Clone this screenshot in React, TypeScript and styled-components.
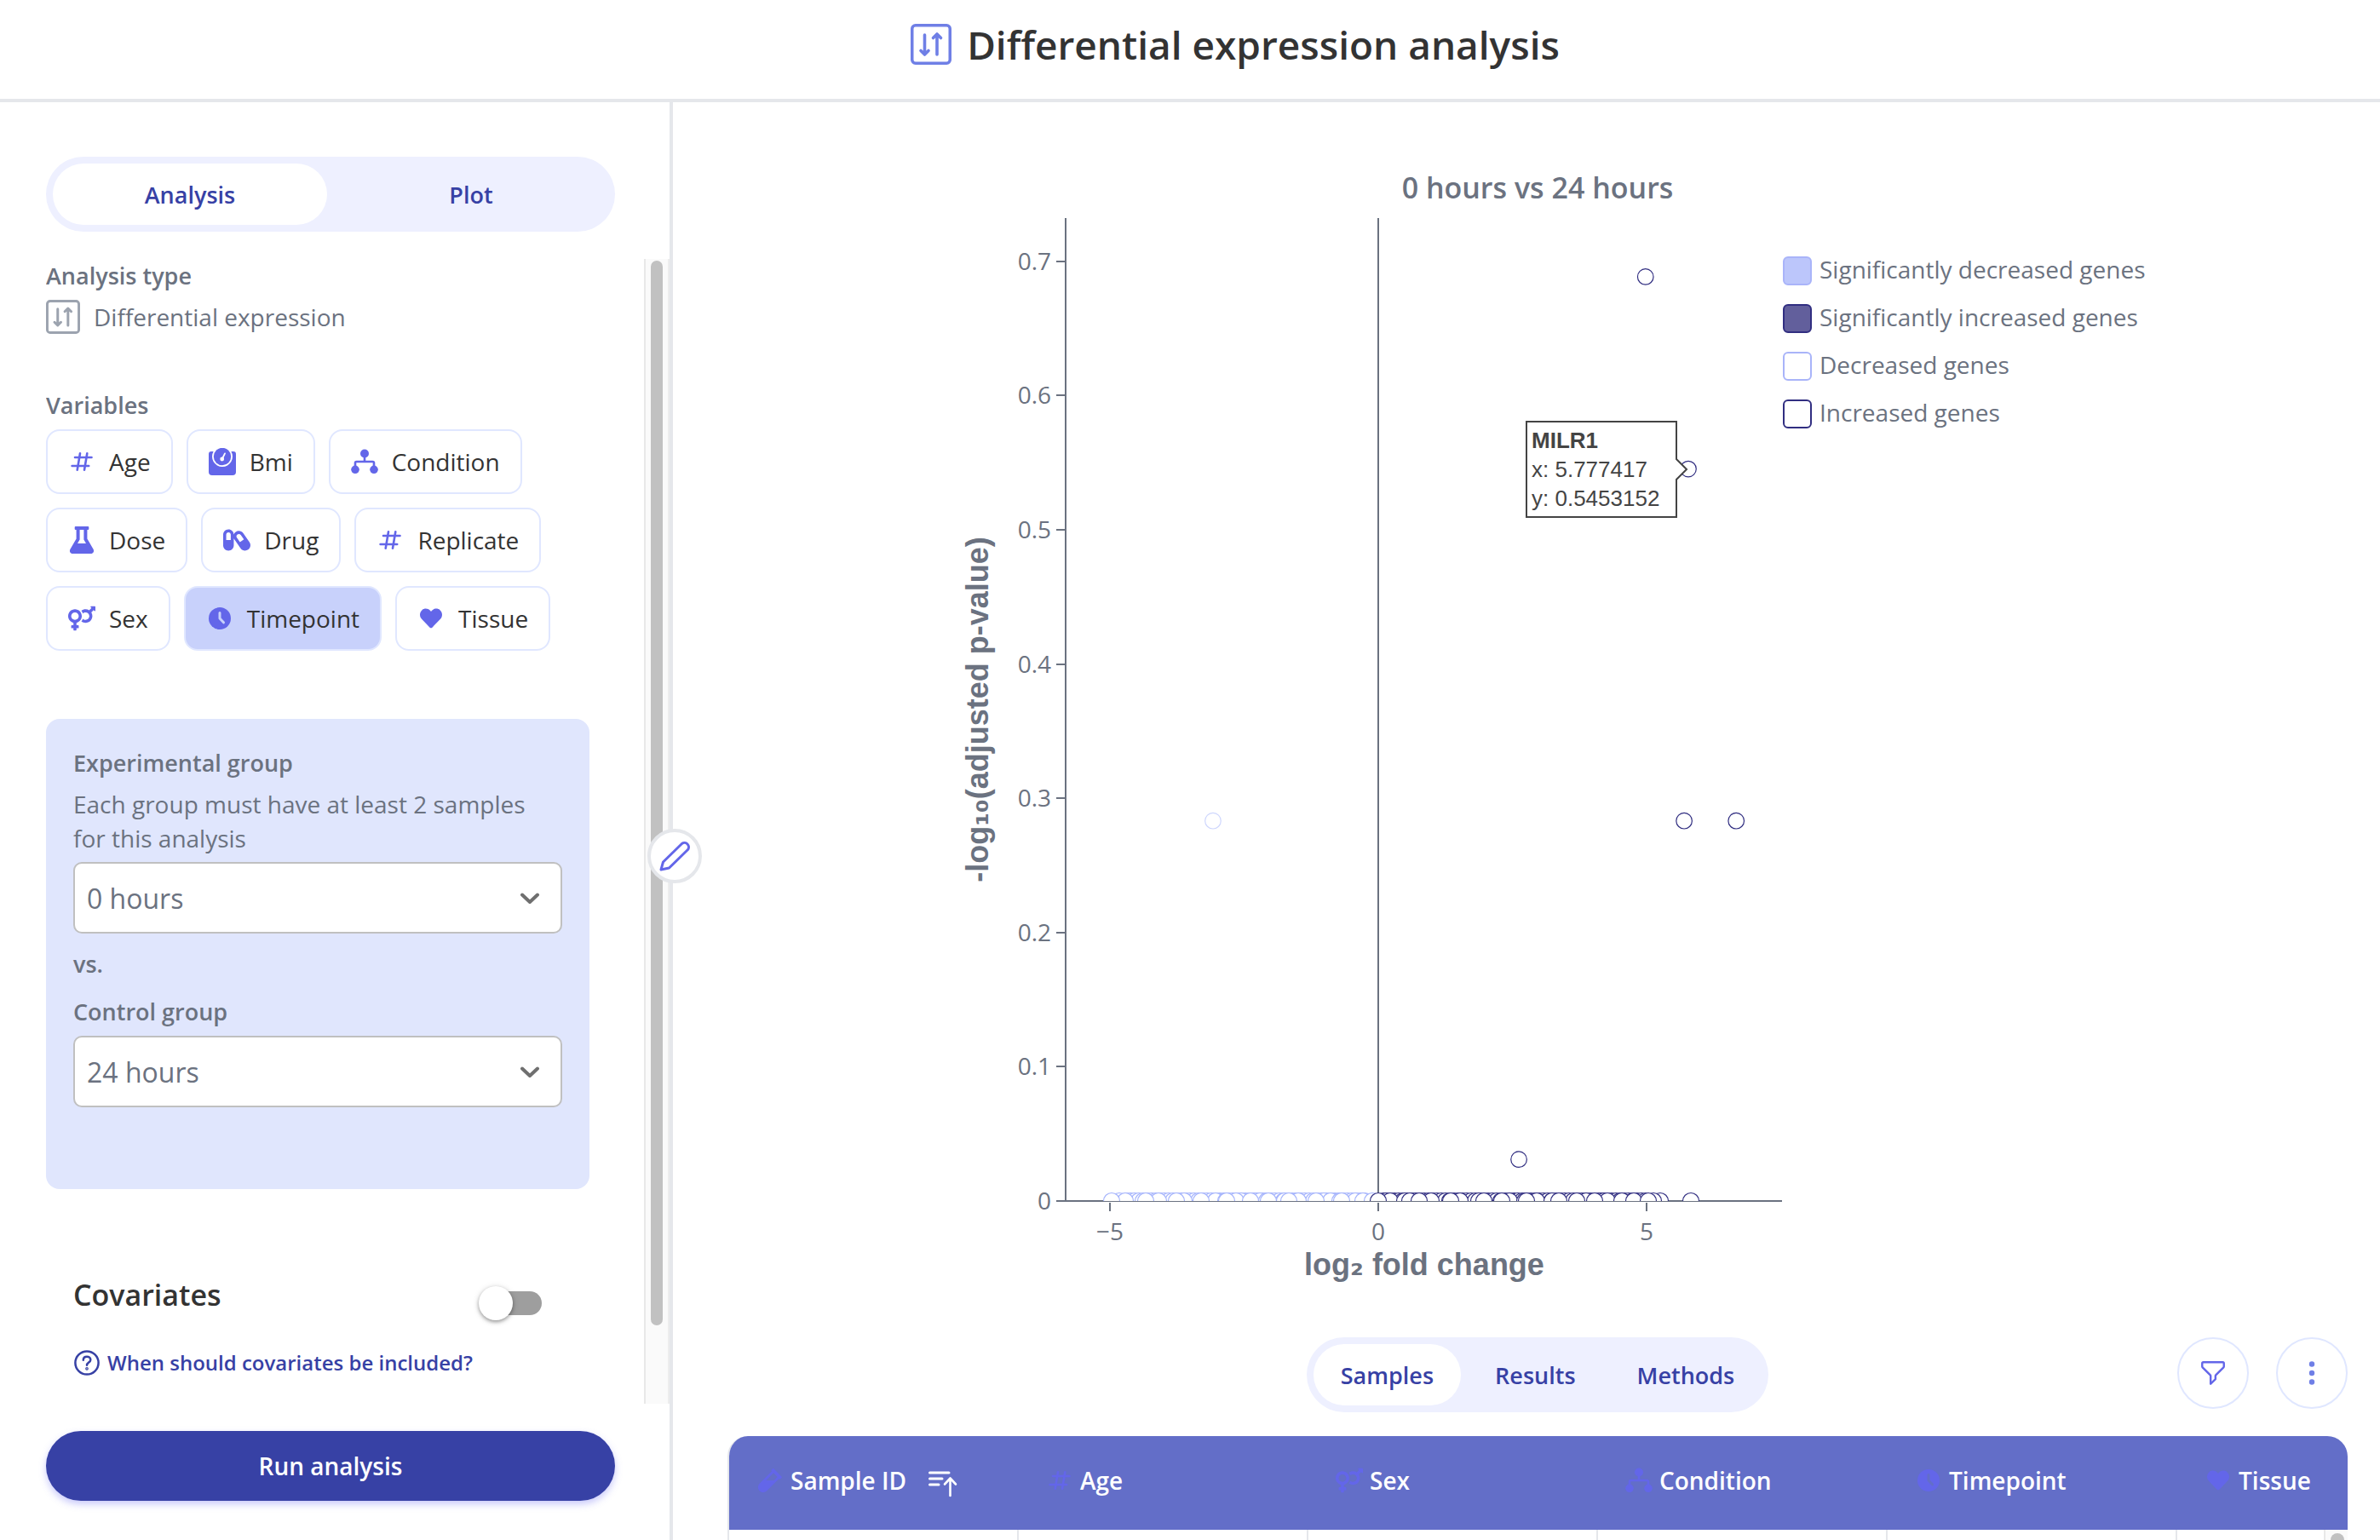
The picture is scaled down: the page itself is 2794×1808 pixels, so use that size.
import React, { useState } from "react";
import styled, { createGlobalStyle } from "styled-components";
import { FaCapsules, FaHeart, FaVenusMars, FaVial } from "react-icons/fa";

const c = {
  ink: "#333333",
  muted: "#6b7280",
  soft: "#9ca3af",
  line: "#e5e7eb",
  indigo: "#3741a5",
  icon: "#6366e9",
  pale: "#eef0ff",
  chip: "#e0e7ff",
  chipOn: "#c8d1fb",
  panel: "#e0e6fd",
  head: "#636ec8",
  light: "#a5b4fc",
  dark: "#312e81",
};

const Global = createGlobalStyle`
  *, *::before, *::after { box-sizing: border-box; }
  body {
    margin: 0;
    background: #ffffff;
    color: ${c.ink};
    font-family: "Open Sans", sans-serif;
    font-size: 28px;
    line-height: 40px;
  }
  button, select, input { font-family: inherit; margin: 0; }
`;

/* ---------- layout ---------- */

const Page = styled.div`
  display: flex;
  flex-direction: column;
  height: 100vh;
  overflow: hidden;
`;

const Header = styled.header`
  display: flex;
  flex: none;
  align-items: center;
  justify-content: center;
  gap: 18px;
  height: 120px;
  padding: 0 0 12px 106px;
  border-bottom: 4px solid ${c.line};
  color: #6f7fe6;
`;

const Title = styled.h1`
  margin: 0;
  font-size: 46px;
  font-weight: 600;
  line-height: 64px;
  color: ${c.ink};
`;

const Body = styled.div`
  display: flex;
  flex: 1;
  min-height: 0;
`;

const Sidebar = styled.aside`
  position: relative;
  display: flex;
  flex: 0 0 790px;
  flex-direction: column;
  border-right: 4px solid ${c.line};
  padding: 64px 0 0 54px;
`;

const SidebarTabs = styled.div`
  padding-right: 64px;
  margin-bottom: 32px;
`;

const ScrollRow = styled.div`
  display: flex;
  flex: 1;
  min-height: 0;
  justify-content: space-between;
`;

const ScrollContent = styled.div`
  width: 638px;
  overflow: hidden;
`;

const ScrollTrack = styled.div`
  display: flex;
  width: 30px;
  padding: 2px 6px;
  border-left: 2px solid #e8e8e8;
  border-right: 2px solid #ededed;
  background: #fafafa;
`;

const ScrollThumb = styled.div`
  flex: 1;
  height: calc(100% - 90px);
  border-radius: 8px;
  background: #c1c1c1;
`;

const SidebarFooter = styled.div`
  padding: 32px 64px 46px 0;
`;

const Main = styled.main`
  display: flex;
  flex: 1;
  min-width: 0;
  flex-direction: column;
  padding: 0 38px 0 64px;
`;

/* ---------- shared controls ---------- */

const TabBar = styled.div<{ $fill?: boolean }>`
  display: ${(p) => (p.$fill ? "flex" : "inline-flex")};
  gap: 8px;
  padding: 8px;
  border-radius: 44px;
  background: ${c.pale};
`;

const Tab = styled.button<{ $active: boolean; $fill?: boolean }>`
  flex: ${(p) => (p.$fill ? "1" : "none")};
  height: 72px;
  padding: 0 32px;
  border: 0;
  border-radius: 36px;
  background: ${(p) => (p.$active ? "#ffffff" : "transparent")};
  color: ${c.indigo};
  font-size: 27px;
  font-weight: 600;
  cursor: pointer;
`;

function Tabs({ items, label, fill }: { items: string[]; label: string; fill?: boolean }) {
  const [active, setActive] = useState(items[0]);
  return (
    <TabBar role="tablist" aria-label={label} $fill={fill}>
      {items.map((t) => (
        <Tab
          key={t}
          type="button"
          role="tab"
          aria-selected={t === active}
          $active={t === active}
          $fill={fill}
          onClick={() => setActive(t)}
        >
          {t}
        </Tab>
      ))}
    </TabBar>
  );
}

const Section = styled.section<{ $gap: number }>`
  display: flex;
  flex-direction: column;
  gap: 8px;
  margin-bottom: ${(p) => p.$gap}px;
`;

const Label = styled.h2`
  margin: 0;
  font-size: 27px;
  font-weight: 600;
  line-height: 40px;
  color: ${c.muted};
`;

const TypeRow = styled.div`
  display: flex;
  align-items: center;
  gap: 16px;
  color: ${c.soft};
  span {
    color: ${c.muted};
  }
`;

const Chips = styled.div`
  display: flex;
  flex-wrap: wrap;
  gap: 16px;
`;

const Chip = styled.button<{ $on: boolean }>`
  display: inline-flex;
  align-items: center;
  gap: 16px;
  height: 76px;
  padding: 0 24px;
  border: 2px solid ${c.chip};
  border-radius: 16px;
  background: ${(p) => (p.$on ? c.chipOn : "#ffffff")};
  color: ${c.ink};
  font-size: 28px;
  cursor: pointer;
`;

const IconBox = styled.span`
  display: inline-flex;
  flex: none;
  align-items: center;
  justify-content: center;
  width: 32px;
  height: 32px;
  color: ${c.icon};
`;

const Panel = styled.section`
  display: flex;
  flex-direction: column;
  gap: 16px;
  margin-bottom: 96px;
  padding: 32px 32px 96px;
  border-radius: 16px;
  background: ${c.panel};
  color: ${c.muted};
`;

const Field = styled.div`
  display: flex;
  flex-direction: column;
  gap: 8px;
`;

const FieldLabel = styled.label`
  font-size: 27px;
  font-weight: 600;
`;

const Hint = styled.p`
  margin: 0;
`;

const Versus = styled.span`
  font-size: 27px;
  font-weight: 600;
`;

const SelectBox = styled.div`
  position: relative;
  svg {
    position: absolute;
    top: 36px;
    right: 26px;
    pointer-events: none;
  }
`;

const Select = styled.select`
  display: block;
  width: 100%;
  height: 84px;
  padding: 0 64px 0 14px;
  border: 2px solid #c0c0c0;
  border-radius: 10px;
  appearance: none;
  background: #ffffff;
  color: ${c.muted};
  font-size: 32px;
`;

const Covariates = styled.section`
  display: flex;
  flex-direction: column;
  align-items: flex-start;
  gap: 16px;
  padding: 0 24px 0 32px;
`;

const CovariatesRow = styled.div`
  display: flex;
  width: 100%;
  height: 76px;
  align-items: center;
  justify-content: space-between;
  padding-right: 32px;
`;

const CovariatesLabel = styled.label`
  align-self: flex-start;
  padding-top: 4px;
  font-size: 34px;
  font-weight: 600;
  line-height: 48px;
`;

const Switch = styled.input`
  display: flex;
  align-items: center;
  width: 68px;
  height: 28px;
  border-radius: 14px;
  appearance: none;
  background: #9e9e9e;
  cursor: pointer;
  &::before {
    content: "";
    flex: none;
    width: 40px;
    height: 40px;
    margin-left: -6px;
    border-radius: 50%;
    background: #ffffff;
    box-shadow: 0 2px 4px rgba(0, 0, 0, 0.35), 0 1px 8px rgba(0, 0, 0, 0.12);
  }
  &:checked::before {
    margin-left: 34px;
  }
`;

const HelpLink = styled.a`
  display: inline-flex;
  align-items: center;
  gap: 8px;
  color: ${c.indigo};
  font-size: 24px;
  font-weight: 600;
  line-height: 32px;
  text-decoration: none;
`;

const RunButton = styled.button`
  width: 100%;
  height: 82px;
  border: 0;
  border-radius: 41px;
  background: ${c.indigo};
  box-shadow: 0 4px 8px rgba(99, 102, 241, 0.35);
  color: #ffffff;
  font-size: 28px;
  font-weight: 600;
  cursor: pointer;
`;

const EditHandle = styled.button`
  position: absolute;
  top: 853px;
  right: -38px;
  display: flex;
  align-items: center;
  justify-content: center;
  width: 64px;
  height: 64px;
  padding: 0;
  border: 4px solid ${c.line};
  border-radius: 50%;
  background: #ffffff;
  color: ${c.icon};
  cursor: pointer;
`;

const Toolbar = styled.div`
  display: grid;
  grid-template-columns: 1fr auto 1fr;
  flex: none;
  align-items: start;
  margin-bottom: 28px;
`;

const Actions = styled.div`
  display: flex;
  grid-column: 3;
  justify-content: flex-end;
  gap: 32px;
`;

const TabsSlot = styled.div`
  display: flex;
  grid-column: 2;
`;

const RoundButton = styled.button`
  display: flex;
  align-items: center;
  justify-content: center;
  width: 84px;
  height: 84px;
  padding: 0;
  border: 2px solid ${c.chip};
  border-radius: 50%;
  background: #ffffff;
  color: ${c.icon};
  cursor: pointer;
`;

const TableFrame = styled.div`
  flex: 1 0 auto;
  border-left: 2px solid ${c.line};
  border-radius: 24px 24px 0 0;
  overflow: hidden;
`;

const Table = styled.table`
  width: 100%;
  border-collapse: separate;
  border-spacing: 0;
  table-layout: fixed;
`;

const HeadCell = styled.th`
  height: 110px;
  padding: 0 0 6px 34px;
  background: ${c.head};
  color: #ffffff;
  font-weight: 600;
  text-align: left;
  &:first-child {
    padding-left: 32px;
  }
`;

const HeadInner = styled.div`
  display: flex;
  align-items: center;
  gap: 8px;
`;

const SortButton = styled.button`
  display: flex;
  margin-left: 16px;
  padding: 8px 0 0;
  border: 0;
  background: transparent;
  color: #ffffff;
`;

const Cell = styled.td`
  height: 80px;
  padding: 0;
  border-left: 2px solid ${c.line};
  &:first-child {
    border-left: 0;
  }
`;

const GutterCell = styled.td`
  padding: 4px 4px 0 6px;
  border-left: 2px solid #e8e8e8;
  background: #fafafa;
  vertical-align: top;
`;

const GutterThumb = styled.div`
  height: 72px;
  border-radius: 8px;
  background: #c1c1c1;
`;

const Col = styled.col<{ $w?: number }>`
  width: ${(p) => (p.$w ? p.$w + "px" : "auto")};
`;

/* ---------- icons ---------- */

const DiffIcon = ({ size }: { size: number }) => (
  <svg width={size} height={size} viewBox="0 0 48 48" fill="none" stroke="currentColor" strokeLinecap="round" strokeLinejoin="round">
    <rect x="1.75" y="1.75" width="44.5" height="44.5" rx="4" strokeWidth="3.5" />
    <path d="M16.5 13V35M12 31.5L16.5 36L21 31.5" strokeWidth="3.6" />
    <path d="M31 36V13M26.5 16.5L31 12L35.500 16.500" strokeWidth="3.600" />
  </svg>
);

const HashIcon = () => (
  <svg width="32" height="32" viewBox="0 0 32 32" fill="none" stroke="currentColor" strokeWidth="2.600" strokeLinecap="round">
    <path d="M8 11H27.500M4.600 21H24.200M14 6.300L10.700 25.700M22.300 6.300L19 25.700" />
  </svg>
);

const ScaleIcon = () => (
  <svg width="32" height="32" viewBox="0 0 32 32" fill="currentColor">
    <path d="M3 4H5.600A12 12 0 1 0 26.400 4H29A3 3 0 0 1 32 7V28A4 4 0 0 1 28 32H4A4 4 0 0 1 0 28V7A3 3 0 0 1 3 4Z" />
    <circle cx="16" cy="10" r="10.200" />
    <circle cx="15.700" cy="13" r="2.400" fill="#fff" />
    <path d="M16.200 12L19 6.400" stroke="#fff" strokeWidth="1.800" strokeLinecap="round" />
  </svg>
);

const TreeIcon = () => (
  <svg width="32" height="32" viewBox="0 0 32 32" fill="currentColor">
    <circle cx="16" cy="6.500" r="5" />
    <circle cx="5" cy="25.300" r="4.800" />
    <circle cx="27" cy="25.300" r="4.800" />
    <path d="M16 8V16M5 23V17.500Q5 16 6.500 16H25.500Q27 16 27 17.500V23" fill="none" stroke="currentColor" strokeWidth="2.600" />
  </svg>
);

const FlaskIcon = () => (
  <svg width="32" height="32" viewBox="0 0 32 32" fill="currentColor" fillRule="evenodd">
    <path d="M8.700 0H23.300A1 1 0 0 1 24.300 1V3A1 1 0 0 1 23.300 4H22.400V14.600L29.400 26.400C31 29.200 29.600 32 26.500 32H5.500C2.400 32 1 29.200 2.600 26.400L9.600 14.600V4H8.700A1 1 0 0 1 7.700 3V1A1 1 0 0 1 8.700 0ZM13.600 4V15.500L11 20H21L18.400 15.500V4Z" />
  </svg>
);

const ClockIcon = ({ cut = c.chipOn }: { cut?: string }) => (
  <svg width="32" height="32" viewBox="0 0 32 32">
    <circle cx="16" cy="16" r="13" fill="currentColor" />
    <path d="M16 9.500V16L20.500 20.800" fill="none" stroke={cut} strokeWidth="3" strokeLinecap="round" strokeLinejoin="round" />
  </svg>
);

const Chevron = () => (
  <svg width="24" height="14" viewBox="0 0 24 14" fill="none" stroke="#6f6f6f" strokeWidth="4" strokeLinecap="round" strokeLinejoin="round">
    <path d="M3 2.500L12 11L21 2.500" />
  </svg>
);

const HelpIcon = () => (
  <svg width="32" height="32" viewBox="0 0 32 32" fill="none" stroke="currentColor" strokeWidth="2.500" strokeLinecap="round">
    <circle cx="16" cy="16" r="13.600" />
    <path d="M11.800 12.800C11.800 10.300 13.600 8.800 16 8.800S20.300 10.300 20.300 12.500C20.300 15.600 16 15.600 16 18.800" />
    <circle cx="16" cy="22.800" r="0.600" />
  </svg>
);

const PencilIcon = () => (
  <svg width="40" height="40" viewBox="-2 -2 40 40" fill="none" stroke="currentColor" strokeWidth="3" strokeLinejoin="round">
    <path d="M2 34L4.500 25L26.500 3.500A5 5 0 0 1 33.500 10.500L11.500 32Z" />
  </svg>
);

const FunnelIcon = () => (
  <svg width="34" height="34" viewBox="0 0 24 24" fill="none" stroke="currentColor" strokeWidth="1.700" strokeLinejoin="round">
    <path d="M3 4a1 1 0 011-1h16a1 1 0 011 1v2.586a1 1 0 01-.293.707l-6.414 6.414a1 1 0 00-.293.707V17l-4 4v-6.586a1 1 0 00-.293-.707L3.293 7.293A1 1 0 013 6.586V4z" />
  </svg>
);

const DotsIcon = () => (
  <svg width="32" height="32" viewBox="0 0 32 32" fill="#6f7fe6">
    <circle cx="16" cy="5.500" r="3.200" />
    <circle cx="16" cy="16" r="3.200" />
    <circle cx="16" cy="26.500" r="3.200" />
  </svg>
);

const SortIcon = () => (
  <svg width="36" height="32" viewBox="0 0 36 32" fill="none" stroke="currentColor" strokeWidth="3" strokeLinecap="round" strokeLinejoin="round">
    <path d="M3.500 3H26M3.500 10H18M3.500 17H14" />
    <path d="M27.500 30V10M21 16.500L27.500 9.500L34 16.500" strokeWidth="2.600" />
  </svg>
);

const icons: Record<string, React.ReactNode> = {
  Age: <HashIcon />,
  Bmi: <ScaleIcon />,
  Condition: <TreeIcon />,
  Dose: <FlaskIcon />,
  Drug: <FaCapsules size={32} />,
  Replicate: <HashIcon />,
  Sex: <FaVenusMars size={32} />,
  Timepoint: <ClockIcon />,
  Tissue: <FaHeart size={26} />,
};

/* ---------- volcano plot ---------- */

const Plot = styled.svg`
  display: block;
  flex: none;
  width: 100%;
  height: auto;
`;

const TickText = styled.text`
  font-family: "Open Sans", sans-serif;
  font-size: 28px;
  fill: ${c.muted};
`;

const PlotTitle = styled.text`
  font-family: "Open Sans", sans-serif;
  font-size: 34px;
  font-weight: 600;
  fill: ${c.muted};
`;

const AxisTitle = styled.text`
  font-family: "Liberation Sans", Arial, sans-serif;
  font-size: 36px;
  font-weight: 700;
  fill: ${c.muted};
`;

const Sub = styled.tspan`
  font-family: "DejaVu Sans", sans-serif;
`;

const HoverText = styled.text<{ $bold?: boolean }>`
  font-family: "Liberation Sans", Arial, sans-serif;
  font-size: 26px;
  font-weight: ${(p) => (p.$bold ? 700 : 400)};
  fill: #444444;
`;

const px = (v: number) => 764 + v * 63;
const py = (v: number) => 1290 - v * 1576;

const sparse = [
  { x: 4.98, y: 0.6885, color: c.dark },
  { x: 5.777417, y: 0.5453152, color: c.dark },
  { x: 5.7, y: 0.2832, color: c.dark },
  { x: 6.67, y: 0.2832, color: c.dark },
  { x: 2.62, y: 0.031, color: c.dark },
  { x: -3.08, y: 0.2832, color: "#cfd7fd" },
];

const range = (from: number, to: number, step: number) => {
  const out: number[] = [];
  for (let v = from; v <= to; v += step) out.push(v);
  return out;
};

/* Genes at y = 0, in paint order: dense background first, then the later points. */
const lowLight = [
  ...range(468, 752, 5),
  460, 467, 506, 536, 573, 585, 603, 618, 621, 625, 633, 654, 669, 700, 708, 719, 737, 746, 757,
  451, 491, 527, 556, 597, 635, 670, 721, 586, 614, 659, 691,
];
const lowDark = [
  ...range(773, 1080, 5),
  770, 773, 778, 795, 808, 826, 860, 882, 918, 936, 950, 968, 1008, 1025, 1029, 1033, 1050,
  1095, 1087, 764, 801, 849, 812, 888, 909, 938, 976, 997, 1018, 1064, 1081, 1131,
];

const legend = [
  { text: "Significantly decreased genes", fill: "#bcc6fb", stroke: "#a9b4f9" },
  { text: "Significantly increased genes", fill: "#625f9c", stroke: c.dark },
  { text: "Decreased genes", fill: "#ffffff", stroke: "#a9b4f9" },
  { text: "Increased genes", fill: "#ffffff", stroke: c.dark },
];

function VolcanoPlot() {
  return (
    <Plot viewBox="0 0 1902 1450" role="img" aria-label="0 hours vs 24 hours volcano plot">
      <defs>
        <clipPath id="plot-area">
          <rect x="397" y="136" width="841" height="1154" />
        </clipPath>
      </defs>
      <PlotTitle x={951} y={113} textAnchor="middle">0 hours vs 24 hours</PlotTitle>

      <g stroke={c.muted} strokeWidth="2">
        <path d="M397 136V1291M764 136V1290M386 1290H1238" />
        {[1, 2, 3, 4, 5, 6, 7].map((i) => (
          <path key={i} d={`M386 ${Math.round(py(i / 10))}H397`} />
        ))}
        {[-5, 0, 5].map((v) => (
          <path key={v} d={`M${px(v)} 1292V1302`} />
        ))}
      </g>
      {[0, 1, 2, 3, 4, 5, 6, 7].map((i) => (
        <TickText key={i} x={380} y={py(i / 10) + 10} textAnchor="end">
          {i === 0 ? "0" : `0.${i}`}
        </TickText>
      ))}
      {["−5", "0", "5"].map((t, i) => (
        <TickText key={t} x={px((i - 1) * 5)} y={1336} textAnchor="middle">{t}</TickText>
      ))}

      <g clipPath="url(#plot-area)" fill="#ffffff" strokeWidth="1.200">
        {lowLight.map((x, i) => (
          <circle key={i} cx={x} cy="1290" r="9.500" stroke={c.light} />
        ))}
        {lowDark.map((x, i) => (
          <circle key={i} cx={x} cy="1290" r="9.500" stroke={c.dark} />
        ))}
        {sparse.map((p, i) => (
          <circle key={i} cx={px(p.x)} cy={py(p.y)} r="9.300" stroke={p.color} />
        ))}
      </g>

      <AxisTitle x={818} y={1377} textAnchor="middle">log<Sub>₂</Sub> fold change</AxisTitle>
      <AxisTitle transform="translate(306 713) rotate(-90)" textAnchor="middle">-log<Sub>₁₀</Sub>(adjusted p-value)</AxisTitle>

      {legend.map((l, i) => (
        <g key={l.text}>
          <rect x="1240" y={182 + i * 56} width="32" height="32" rx="5" fill={l.fill} stroke={l.stroke} strokeWidth="2" />
          <TickText x={1282} y={207 + i * 56}>{l.text}</TickText>
        </g>
      ))}

      <path d="M938 375H1114V419L1126 431L1114 443V487H938Z" fill="#ffffff" stroke="#444444" strokeWidth="2" />
      <HoverText $bold x={944} y={406}>MILR1</HoverText>
      <HoverText x={944} y={440}>x: 5.777417</HoverText>
      <HoverText x={944} y={474}>y: 0.5453152</HoverText>
    </Plot>
  );
}

/* ---------- page ---------- */

const variables = ["Age", "Bmi", "Condition", "Dose", "Drug", "Replicate", "Sex", "Timepoint", "Tissue"];
const groups = ["0 hours", "24 hours"];

function GroupSelect({ id, value }: { id: string; value: string }) {
  return (
    <SelectBox>
      <Select id={id} defaultValue={value}>
        {groups.map((g) => (
          <option key={g}>{g}</option>
        ))}
      </Select>
      <Chevron />
    </SelectBox>
  );
}

export default function App() {
  const [picked, setPicked] = useState("Timepoint");
  return (
    <Page>
      <Global />
      <Header>
        <DiffIcon size={48} />
        <Title>Differential expression analysis</Title>
      </Header>
      <Body>
        <Sidebar>
          <SidebarTabs>
            <Tabs items={["Analysis", "Plot"]} label="Settings" fill />
          </SidebarTabs>
          <ScrollRow>
            <ScrollContent>
              <Section $gap={64}>
                <Label>Analysis type</Label>
                <TypeRow>
                  <DiffIcon size={40} />
                  <span>Differential expression</span>
                </TypeRow>
              </Section>
              <Section $gap={80}>
                <Label>Variables</Label>
                <Chips>
                  {variables.map((v) => (
                    <Chip key={v} type="button" aria-pressed={v === picked} $on={v === picked} onClick={() => setPicked(v)}>
                      <IconBox>{icons[v]}</IconBox>
                      {v}
                    </Chip>
                  ))}
                </Chips>
              </Section>
              <Panel>
                <Field>
                  <FieldLabel htmlFor="experimental">Experimental group</FieldLabel>
                  <Hint>Each group must have at least 2 samples for this analysis</Hint>
                  <GroupSelect id="experimental" value="0 hours" />
                </Field>
                <Versus>vs.</Versus>
                <Field>
                  <FieldLabel htmlFor="control">Control group</FieldLabel>
                  <GroupSelect id="control" value="24 hours" />
                </Field>
              </Panel>
              <Covariates>
                <CovariatesRow>
                  <CovariatesLabel htmlFor="covariates">Covariates</CovariatesLabel>
                  <Switch id="covariates" type="checkbox" role="switch" />
                </CovariatesRow>
                <HelpLink href="#covariates">
                  <HelpIcon />
                  When should covariates be included?
                </HelpLink>
              </Covariates>
            </ScrollContent>
            <ScrollTrack>
              <ScrollThumb />
            </ScrollTrack>
          </ScrollRow>
          <SidebarFooter>
            <RunButton type="button">Run analysis</RunButton>
          </SidebarFooter>
          <EditHandle type="button" aria-label="Edit">
            <PencilIcon />
          </EditHandle>
        </Sidebar>
        <Main>
          <VolcanoPlot />
          <Toolbar>
            <TabsSlot>
              <Tabs items={["Samples", "Results", "Methods"]} label="Tables" />
            </TabsSlot>
            <Actions>
              <RoundButton type="button" aria-label="Filter">
                <FunnelIcon />
              </RoundButton>
              <RoundButton type="button" aria-label="More options">
                <DotsIcon />
              </RoundButton>
            </Actions>
          </Toolbar>
          <TableFrame>
            <Table>
              <colgroup>
                <Col $w={338} />
                <Col $w={340} />
                <Col $w={340} />
                <Col $w={340} />
                <Col $w={340} />
                <Col />
                <Col $w={28} />
              </colgroup>
              <thead>
                <tr>
                  <HeadCell>
                    <HeadInner>
                      <IconBox><FaVial size={30} /></IconBox>
                      Sample ID
                      <SortButton type="button" aria-label="Sort by Sample ID">
                        <SortIcon />
                      </SortButton>
                    </HeadInner>
                  </HeadCell>
                  {["Age", "Sex", "Condition", "Timepoint", "Tissue"].map((h) => (
                    <HeadCell key={h} colSpan={h === "Tissue" ? 2 : 1}>
                      <HeadInner>
                        <IconBox>{h === "Timepoint" ? <ClockIcon cut={c.head} /> : icons[h]}</IconBox>
                        {h}
                      </HeadInner>
                    </HeadCell>
                  ))}
                </tr>
              </thead>
              <tbody>
                <tr>
                  <Cell />
                  <Cell />
                  <Cell />
                  <Cell />
                  <Cell />
                  <Cell />
                  <GutterCell>
                    <GutterThumb />
                  </GutterCell>
                </tr>
              </tbody>
            </Table>
          </TableFrame>
        </Main>
      </Body>
    </Page>
  );
}
